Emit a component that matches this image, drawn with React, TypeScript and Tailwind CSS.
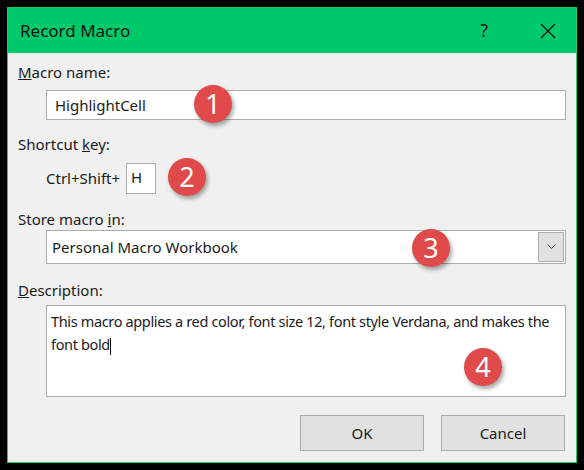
import React from "react";

function Badge({ n, cls }: { n: number; cls: string }) {
  return (
    <div className={`absolute w-[38px] h-[38px] rounded-full bg-[#e04a4a] text-white flex items-center justify-center text-[27px] shadow-[2px_3px_4px_rgba(0,0,0,0.35)] ${cls}`}>
      {n}
    </div>
  );
}

export default function App() {
  return (
    <div className="w-[584px] h-[470px] bg-black p-[7px]" style={{ fontFamily: '"Noto Sans", "Open Sans", sans-serif' }}>
      <div className="relative w-full h-full bg-[#f0f0f0] border border-[#1dc86a] flex flex-col text-[15px] text-[#1a1a1a]">
        <div className="h-[45px] bg-[#00c96b] flex items-center pl-[12px] shrink-0">
          <span className="text-[17px] text-[#111]">Record Macro</span>
          <span className="ml-auto mr-[52px] text-[18px]">?</span>
          <svg width="16" height="16" viewBox="0 0 16 16" className="mr-[20px]"><path d="M1 1L15 15M15 1L1 15" stroke="#111" strokeWidth="1.3" /></svg>
        </div>
        <div className="flex flex-col pl-[10px] pr-[10px]">
          <div className="mt-[8px] h-[22px]"><u>M</u>acro name:</div>
          <div className="ml-[28px] mt-[7px] h-[30px] bg-white border border-[#adadad] flex items-center px-[8px]">HighlightCell</div>
          <div className="mt-[13px] h-[22px]">Shortcut <u>k</u>ey:</div>
          <div className="ml-[28px] mt-[8px] flex items-center gap-[6px]">
            <span>Ctrl+Shift+</span>
            <div className="w-[30px] h-[31px] bg-white border border-[#adadad] px-[4px] pt-[2px]">H</div>
          </div>
          <div className="mt-[14px] h-[22px]">Store macro <u>i</u>n:</div>
          <div className="ml-[28px] mt-0 h-[34px] bg-white border border-[#adadad] flex items-center pl-[5px] pr-[1px]">
            <span>Personal Macro Workbook</span>
            <div className="ml-auto w-[26px] h-[30px] bg-[#e1e1e1] border border-[#adadad] flex items-center justify-center">
              <svg width="9" height="6" viewBox="0 0 9 6"><path d="M0.5 0.5L4.5 4.5L8.5 0.5" stroke="#444" fill="none" /></svg>
            </div>
          </div>
          <div className="mt-[15px] h-[22px]"><u>D</u>escription:</div>
          <div className="ml-[28px] mt-[4px] h-[92px] bg-white border border-[#adadad] px-[4px] pt-[4px] leading-[23px] text-[14.5px] tracking-[-0.35px]">
            This macro applies a red color, font size 12, font style Verdana, and makes the font bold<span className="inline-block w-[1px] h-[17px] bg-black align-middle" />
          </div>
          <div className="mt-[18px] flex justify-end gap-[17px] pr-[1px]">
            <div className="w-[124px] h-[36px] bg-[#e1e1e1] border border-[#adadad] flex items-center justify-center">OK</div>
            <div className="w-[124px] h-[36px] bg-[#e1e1e1] border border-[#adadad] flex items-center justify-center">Cancel</div>
          </div>
        </div>
        <Badge n={1} cls="left-[186px] top-[77px]" />
        <Badge n={2} cls="left-[160px] top-[150px]" />
        <Badge n={3} cls="left-[404px] top-[221px]" />
        <Badge n={4} cls="left-[456px] top-[340px]" />
      </div>
    </div>
  );
}
